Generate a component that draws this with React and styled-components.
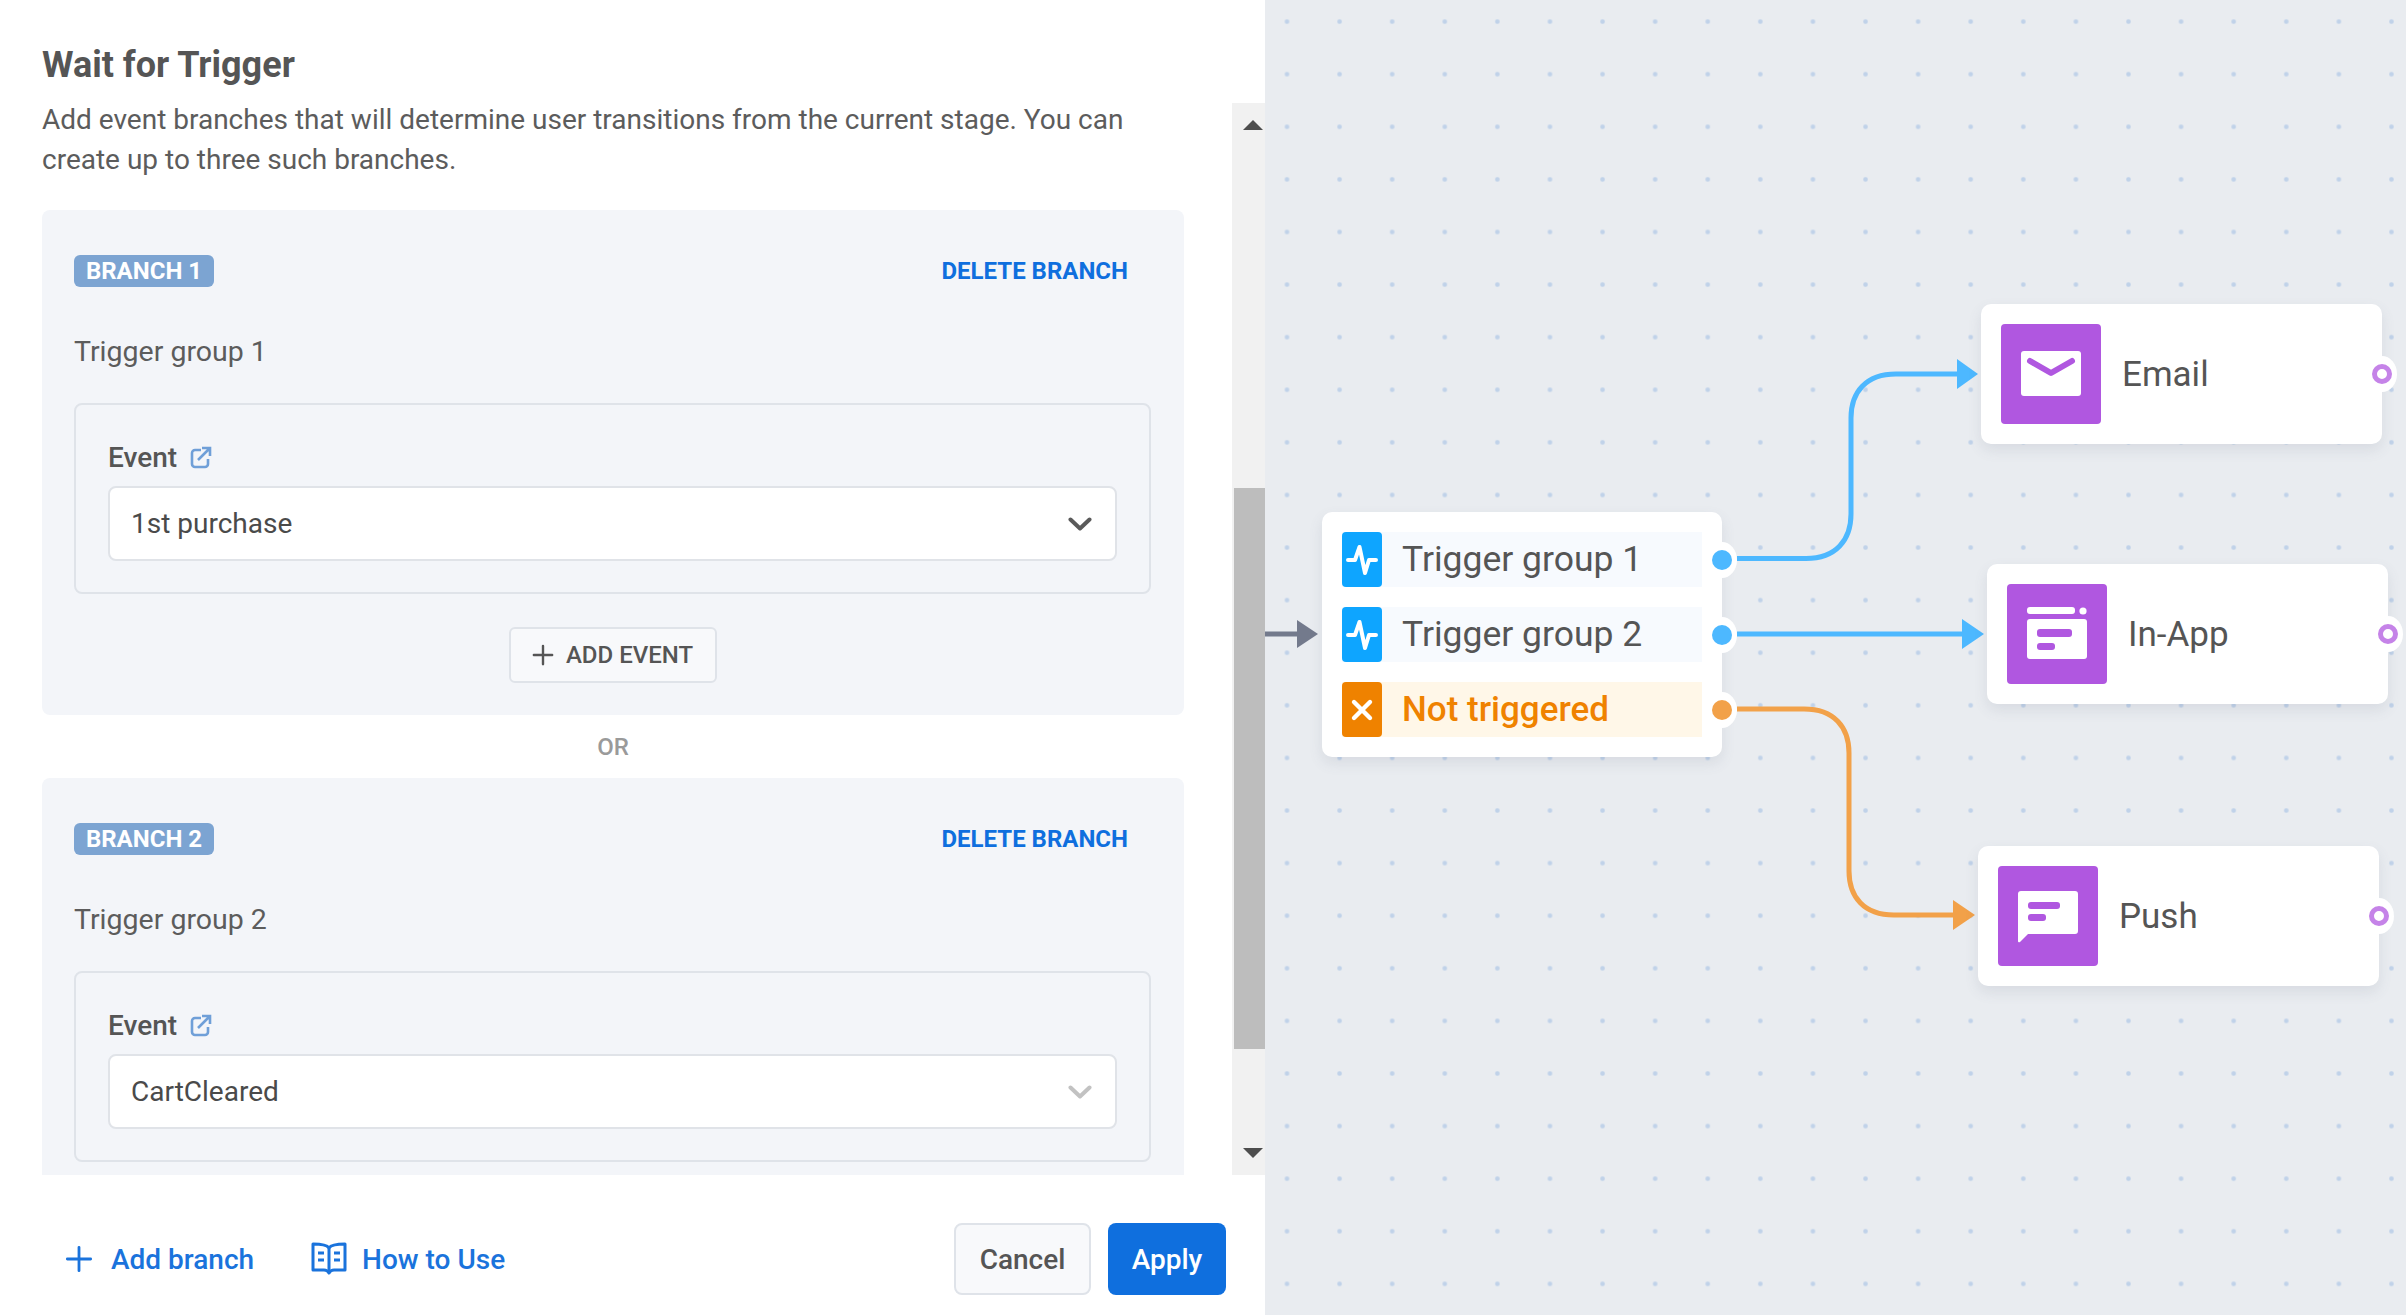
import styled, { createGlobalStyle } from "styled-components";

const GlobalStyle = createGlobalStyle`
  html, body {
    margin: 0;
    padding: 0;
    background: #fff;
  }
  body {
    font-family: Roboto, "Liberation Sans", sans-serif;
    color: #555;
  }
  * {
    box-sizing: border-box;
  }
`;

const Page = styled.div`
  display: flex;
  width: 2406px;
  height: 1315px;
  overflow: hidden;
`;

const Panel = styled.div`
  width: 1265px;
  height: 100%;
  flex: none;
  display: flex;
  flex-direction: column;
  background: #fff;
`;

const Upper = styled.div`
  height: 1175px;
  display: flex;
  overflow: hidden;
`;

const Content = styled.div`
  width: 1232px;
  padding: 45px 48px 0 42px;
  overflow: hidden;
`;

const Title = styled.h1`
  margin: 0;
  font-size: 36px;
  line-height: 40px;
  font-weight: 700;
  color: #555;
`;

const Description = styled.p`
  margin: 15px 0 30px;
  font-size: 28px;
  line-height: 40px;
  color: #5c5c5c;
`;

const BranchCard = styled.section`
  padding: 45px 33px 32px 32px;
  background: #f3f5f9;
  border-radius: 8px;
`;

const BranchHeader = styled.div`
  display: flex;
  align-items: center;
  justify-content: space-between;
  padding-right: 23px;
`;

const Badge = styled.span`
  height: 32px;
  width: 140px;
  display: flex;
  align-items: center;
  justify-content: center;
  font-size: 24px;
  font-weight: 700;
  color: #fff;
  background: #7ca4d2;
  border-radius: 6px;
`;

const DeleteLink = styled.a`
  font-size: 24px;
  font-weight: 700;
  color: #0f6fde;
`;

const GroupName = styled.div`
  margin: 45px 0 31px;
  font-size: 28.5px;
  line-height: 40px;
  color: #5c5c5c;
`;

const EventBox = styled.div`
  padding: 36px 32px 31px 32px;
  border: 2px solid #dfe3e9;
  border-radius: 8px;
`;

const EventLabel = styled.div`
  display: flex;
  align-items: center;
  gap: 13px;
  height: 32px;
  margin-bottom: 13px;
  font-size: 28px;
  font-weight: 500;
  color: #555;
`;

const SelectBox = styled.div`
  height: 75px;
  padding: 0 23px 0 21px;
  display: flex;
  align-items: center;
  justify-content: space-between;
  background: #fff;
  border: 2px solid #e0e3e8;
  border-radius: 8px;
  font-size: 28px;
  color: #4a4a4a;
`;

const AddEventRow = styled.div`
  display: flex;
  justify-content: center;
  margin-top: 33px;
`;

const AddEventButton = styled.button`
  width: 208px;
  height: 56px;
  padding: 0;
  display: flex;
  align-items: center;
  justify-content: center;
  gap: 12px;
  background: #f8f9fb;
  border: 2px solid #dfe3e9;
  border-radius: 6px;
  font-family: inherit;
  font-size: 24px;
  font-weight: 500;
  color: #555;
`;

const OrLabel = styled.div`
  height: 63px;
  display: flex;
  align-items: center;
  justify-content: center;
  font-size: 24px;
  font-weight: 500;
  color: #9a9a9a;
`;

const Scrollbar = styled.div`
  width: 33px;
  margin-top: 103px;
  padding-left: 2px;
  display: flex;
  flex-direction: column;
  align-items: stretch;
  background: #f1f1f1;
`;

const ScrollArrow = styled.div`
  flex: none;
  height: 44px;
  display: flex;
  align-items: center;
  justify-content: center;
  padding-left: 7px;
  color: #4d4d4d;
`;

const ScrollSpacer = styled.div`
  flex: 1;
`;

const ScrollThumb = styled.div`
  height: 561px;
  margin-top: 341px;
  background: #bdbdbd;
`;

const Footer = styled.footer`
  flex: 1;
  display: flex;
  align-items: flex-start;
  justify-content: space-between;
  padding: 48px 39px 0 65px;
`;

const FooterLinks = styled.div`
  display: flex;
  align-items: center;
  height: 72px;
`;

const FooterLink = styled.a`
  display: flex;
  align-items: center;
  gap: ${(p) => p.$gap}px;
  margin-right: 57px;
  font-size: 28px;
  font-weight: 500;
  color: #1a73dc;
`;

const FooterButtons = styled.div`
  display: flex;
  gap: 17px;
`;

const Button = styled.button`
  height: 72px;
  width: ${(p) => (p.$primary ? 118 : 137)}px;
  padding: 0;
  font-family: inherit;
  font-size: 28px;
  font-weight: 500;
  color: ${(p) => (p.$primary ? "#fff" : "#555")};
  background: ${(p) => (p.$primary ? "#0f6fde" : "#f8f9fb")};
  border: ${(p) => (p.$primary ? "none" : "2px solid #dfe3e9")};
  border-radius: 8px;
`;

const Canvas = styled.main`
  position: relative;
  flex: 1;
  background-color: #e9ecf0;
  background-image: radial-gradient(circle, #c0d2e9 1.6px, transparent 3px);
  background-size: 52.6px 52.6px;
  background-position: -4.3px -4.7px;
`;

const Wires = styled.svg`
  position: absolute;
  left: 0;
  top: 0;
`;

const CanvasNode = styled.div`
  position: absolute;
  left: ${(p) => p.$x}px;
  top: ${(p) => p.$y}px;
  background: #fff;
  border-radius: 10px;
  box-shadow: 0 6px 14px rgba(90, 100, 120, 0.12);
`;

const TriggerNode = styled(CanvasNode)`
  width: 400px;
  height: 245px;
  padding: 20px;
  display: flex;
  flex-direction: column;
  gap: 20px;
`;

const TriggerRow = styled.div`
  position: relative;
  height: 55px;
  display: flex;
  align-items: center;
  padding-bottom: ${(p) => (p.$warn ? 0 : 2)}px;
  background: ${(p) => (p.$warn ? "#fff7e8" : "#f7fafe")};
  color: ${(p) => (p.$warn ? "#ef8200" : "#555")};
  font-size: ${(p) => (p.$warn ? 35 : 35.5)}px;
  font-weight: ${(p) => (p.$warn ? 500 : 400)};
`;

const RowIcon = styled.div`
  width: 40px;
  height: 55px;
  margin-right: 20px;
  flex: none;
  display: flex;
  align-self: flex-start;
  background: ${(p) => (p.$warn ? "#ef8200" : "#0ea5ff")};
  border-radius: 4px;
`;

const PortNotch = styled.span`
  position: absolute;
  width: 30px;
  height: 36px;
  display: flex;
  align-items: center;
  justify-content: center;
  background: #fff;
  border-radius: 50%;
`;

const RowNotch = styled(PortNotch)`
  right: -35px;
  top: 9.5px;
`;

const ActionNotch = styled(PortNotch)`
  right: -15px;
  top: 52px;
`;

const RowDot = styled.span`
  width: 20px;
  height: 20px;
  border-radius: 50%;
  background: ${(p) => (p.$warn ? "#f2a149" : "#4db8ff")};
`;

const RingDot = styled.span`
  width: 20px;
  height: 20px;
  border: 5px solid #c583e8;
  border-radius: 50%;
  background: #fff;
`;

const ActionNodeBox = styled(CanvasNode)`
  width: 401px;
  height: 140px;
  padding: 20px;
  display: flex;
  align-items: center;
  gap: 21px;
  font-size: 35px;
  color: #555;
`;

const ActionIcon = styled.div`
  width: 100px;
  height: 100px;
  flex: none;
  display: flex;
  background: #b057e0;
  border-radius: 4px;
`;

const ExternalIcon = () => (
  <svg width="22" height="24" viewBox="0 0 22 24" fill="none" stroke="#6f9fd8" strokeWidth="2.6">
    <path d="M11 5H5a3 3 0 0 0-3 3v11a3 3 0 0 0 3 3h10a3 3 0 0 0 3-3v-5" />
    <path d="M8 15 19 4M12 3h8v8" />
  </svg>
);

const Chevron = ({ muted }) => (
  <svg width="24" height="14" viewBox="0 0 24 14" fill="none" stroke={muted ? "#c2c2c2" : "#5a5a5a"} strokeWidth="4" strokeLinecap="round" strokeLinejoin="round">
    <path d="M2.5 2.5 12 11.5l9.5-9" />
  </svg>
);

const PlusIcon = ({ size, color, width }) => (
  <svg width={size} height={size} viewBox="0 0 24 24" fill="none" stroke={color} strokeWidth={width} strokeLinecap="round">
    <path d="M12 2v20M2 12h20" />
  </svg>
);

const BookIcon = () => (
  <svg width="36" height="34" viewBox="0 0 36 34" fill="none" stroke="#1a73dc" strokeWidth="3" strokeLinejoin="round">
    <path d="M18 6C16 3 12 2 2 2v26h11c3 0 4 1 5 3 1-2 2-3 5-3h11V2C24 2 20 3 18 6Z" />
    <path d="M18 6v25M7 11h6M7 18h6M23 11h6M23 18h6" />
  </svg>
);

const PulseIcon = () => (
  <svg width="40" height="55" viewBox="0 0 40 55" fill="none" stroke="#fff" strokeWidth="4" strokeLinecap="round" strokeLinejoin="round">
    <path d="M6 28h7l4.5-13 5.5 26 4-13h7" />
  </svg>
);

const CloseIcon = () => (
  <svg width="40" height="55" viewBox="0 0 40 55" fill="none" stroke="#fff" strokeWidth="4.4" strokeLinecap="round">
    <path d="M12 20l16 16M28 20 12 36" />
  </svg>
);

const EmailGlyph = () => (
  <svg width="100" height="100" viewBox="0 0 100 100">
    <rect x="20" y="27" width="60" height="45" rx="3" fill="#fff" />
    <path d="M29 37 50 49 71 37" fill="none" stroke="#b057e0" strokeWidth="6" strokeLinecap="round" strokeLinejoin="round" />
  </svg>
);

const InAppGlyph = () => (
  <svg width="100" height="100" viewBox="0 0 100 100">
    <rect x="20" y="23" width="48" height="7" rx="3" fill="#fff" />
    <circle cx="76" cy="27" r="3.6" fill="#fff" />
    <rect x="20" y="35" width="60" height="40" rx="3" fill="#fff" />
    <rect x="30" y="45" width="35" height="8" rx="3" fill="#b057e0" />
    <rect x="30" y="59" width="18" height="7" rx="3" fill="#b057e0" />
  </svg>
);

const PushGlyph = () => (
  <svg width="100" height="100" viewBox="0 0 100 100">
    <path d="M23 25h54a3 3 0 0 1 3 3v37a3 3 0 0 1-3 3H30l-8 8a1.2 1.2 0 0 1-2-1V28a3 3 0 0 1 3-3Z" fill="#fff" />
    <rect x="30" y="36" width="32" height="7" rx="3" fill="#b057e0" />
    <rect x="30" y="48" width="18" height="7" rx="3" fill="#b057e0" />
  </svg>
);

const Branch = ({ index, event, muted, canAddEvent }) => (
  <BranchCard>
    <BranchHeader>
      <Badge>BRANCH {index}</Badge>
      <DeleteLink>DELETE BRANCH</DeleteLink>
    </BranchHeader>
    <GroupName>Trigger group {index}</GroupName>
    <EventBox>
      <EventLabel>
        Event <ExternalIcon />
      </EventLabel>
      <SelectBox>
        {event}
        <Chevron muted={muted} />
      </SelectBox>
    </EventBox>
    {canAddEvent && (
      <AddEventRow>
        <AddEventButton>
          <PlusIcon size={22} color="#555" width={2.6} />
          ADD EVENT
        </AddEventButton>
      </AddEventRow>
    )}
  </BranchCard>
);

const TriggerLine = ({ warn, icon, children }) => (
  <TriggerRow $warn={warn}>
    <RowIcon $warn={warn}>{icon}</RowIcon>
    {children}
    <RowNotch>
      <RowDot $warn={warn} />
    </RowNotch>
  </TriggerRow>
);

const ActionNode = ({ x, y, icon, label }) => (
  <ActionNodeBox $x={x} $y={y}>
    <ActionIcon>{icon}</ActionIcon>
    {label}
    <ActionNotch>
      <RingDot />
    </ActionNotch>
  </ActionNodeBox>
);

export default function App() {
  return (
    <Page>
      <GlobalStyle />
      <Panel>
        <Upper>
          <Content>
            <Title>Wait for Trigger</Title>
            <Description>
              Add event branches that will determine user transitions from the current stage. You can create up to three such branches.
            </Description>
            <Branch index={1} event="1st purchase" canAddEvent />
            <OrLabel>OR</OrLabel>
            <Branch index={2} event="CartCleared" muted />
          </Content>
          <Scrollbar>
            <ScrollArrow>
              <svg width="20" height="10" viewBox="0 0 20 10" fill="currentColor"><path d="M10 0 20 10H0Z" /></svg>
            </ScrollArrow>
            <ScrollThumb />
            <ScrollSpacer />
            <ScrollArrow>
              <svg width="20" height="10" viewBox="0 0 20 10" fill="currentColor"><path d="M0 0H20L10 10Z" /></svg>
            </ScrollArrow>
          </Scrollbar>
        </Upper>
        <Footer>
          <FooterLinks>
            <FooterLink $gap={18}>
              <PlusIcon size={28} color="#1a73dc" width={2.4} />
              Add branch
            </FooterLink>
            <FooterLink $gap={15}>
              <BookIcon />
              How to Use
            </FooterLink>
          </FooterLinks>
          <FooterButtons>
            <Button>Cancel</Button>
            <Button $primary>Apply</Button>
          </FooterButtons>
        </Footer>
      </Panel>
      <Canvas>
        <Wires width="1141" height="1315" viewBox="1265 0 1141 1315" fill="none" strokeWidth="5">
          <path d="M1265 634H1300" stroke="#737a8c" />
          <path d="M1297 620 1318 634 1297 648Z" fill="#737a8c" />
          <path d="M1737 558.5H1806C1836 558.5 1851 540 1851 514V418C1851 392 1866 374 1896 374H1960" stroke="#4db8ff" />
          <path d="M1957 359 1978 374 1957 389Z" fill="#4db8ff" />
          <path d="M1737 634H1965" stroke="#4db8ff" />
          <path d="M1962 619 1984 634 1962 649Z" fill="#4db8ff" />
          <path d="M1737 709H1804C1834 709 1849 727 1849 753V871C1849 897 1864 915 1894 915H1956" stroke="#f2a149" />
          <path d="M1953 900 1975 915 1953 930Z" fill="#f2a149" />
        </Wires>
        <TriggerNode $x={57} $y={512}>
          <TriggerLine icon={<PulseIcon />}>Trigger group 1</TriggerLine>
          <TriggerLine icon={<PulseIcon />}>Trigger group 2</TriggerLine>
          <TriggerLine warn icon={<CloseIcon />}>Not triggered</TriggerLine>
        </TriggerNode>
        <ActionNode x={716} y={304} icon={<EmailGlyph />} label="Email" />
        <ActionNode x={722} y={564} icon={<InAppGlyph />} label="In-App" />
        <ActionNode x={713} y={846} icon={<PushGlyph />} label="Push" />
      </Canvas>
    </Page>
  );
}
